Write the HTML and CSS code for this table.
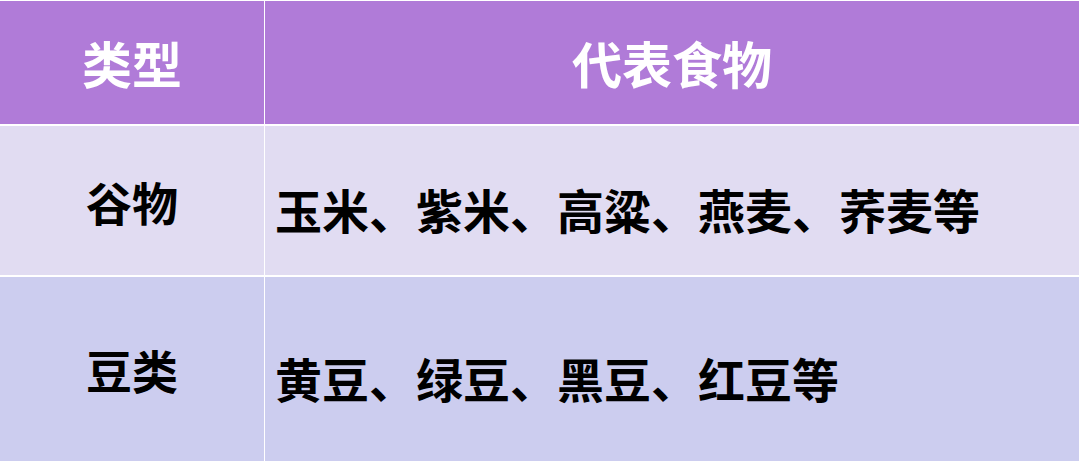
FILE: index.html
```html
<!DOCTYPE html>
<html lang="zh">
<head>
<meta charset="utf-8">
<link rel="stylesheet" href="styles.css">
</head>
<body>
<div class="table">
  <div class="cell head">类型</div>
  <div class="cell head">代表食物</div>
  <div class="cell r1 type">谷物</div>
  <div class="cell r1 food">玉米、紫米、高粱、燕麦、荞麦等</div>
  <div class="cell r2 type">豆类</div>
  <div class="cell r2 food">黄豆、绿豆、黑豆、红豆等</div>
</div>
</body>
</html>
```
FILE: styles.css
```css
html, body {
  margin: 0;
  padding: 0;
  background: #ffffff;
}
body {
  width: 1080px;
  height: 463px;
  overflow: hidden;
  font-family: "Noto Sans CJK SC", "Noto Sans", sans-serif;
}
.table {
  display: grid;
  grid-template-columns: 264px 814px;
  grid-template-rows: 123px 149px 184px;
  column-gap: 1px;
  row-gap: 2px;
  padding-top: 1px;
  width: 1079px;
}
.cell {
  display: flex;
  align-items: center;
  font-weight: 700;
}
.head {
  background: #b07bd8;
  color: #ffffff;
  font-size: 50px;
  justify-content: center;
  padding-bottom: 2px;
}
.r1 { background: #e1dcf2; }
.r2 { background: #cccdef; }
.type {
  justify-content: center;
  font-size: 46px;
  color: #000;
}
.food {
  font-size: 47px;
  color: #000;
  padding-left: 10px;
  padding-top: 16px;
}
```
